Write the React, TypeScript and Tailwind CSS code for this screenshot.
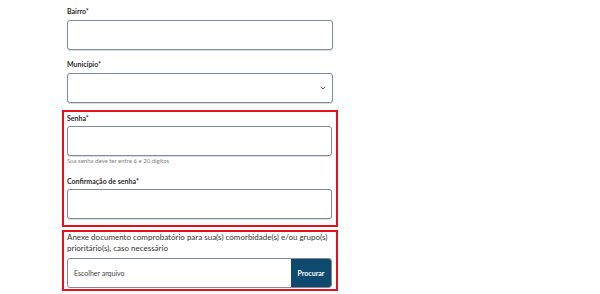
import React from "react";

const inputCls =
    "block w-full h-[30px] rounded-[3px] border border-[#7d8aa0] bg-white shadow-[0_1px_1px_rgba(0,0,0,0.15)]";
const labelCls = "block text-[7px] leading-[10px] font-bold text-[#2b2b2b]";

export default function App() {
    return (
        <div className="w-[600px] h-[294px] bg-white overflow-hidden" style={{ fontFamily: "Lato, 'Open Sans', sans-serif" }}>
            <div className="ml-[62px] w-[276px] pt-[6px]">
                {/* Bairro */}
                <div className="px-[5px]">
                    <label className={labelCls}>Bairro*</label>
                    <div className={`${inputCls} mt-[4px]`}></div>
                </div>

                {/* Município */}
                <div className="px-[5px] mt-[9px]">
                    <label className={labelCls}>Município*</label>
                    <div className={`${inputCls} mt-[4px] flex items-center justify-end pr-[6px]`}>
                        <svg width="6" height="4" viewBox="0 0 6 4" fill="none">
                            <path d="M0.8 0.8l2.2 2.2L5.2 0.8" stroke="#555" strokeWidth="1" />
                        </svg>
                    </div>
                </div>

                {/* Senha */}
                <div className="mt-[7px] border-2 border-[#e8101a] pl-[3px] pr-[4px] pt-[1px] pb-[6px]">
                    <label className={labelCls}>Senha*</label>
                    <div className={`${inputCls} mt-[3px]`}></div>
                    <p className="mt-[1px] text-[6px] leading-[8px] text-[#808080]">Sua senha deve ter entre 6 e 20 dígitos</p>
                    <label className={`${labelCls} mt-[11px]`}>Confirmação de senha*</label>
                    <div className={`${inputCls} mt-[3px]`}></div>
                </div>

                {/* Anexo */}
                <div className="mt-[3px] border-2 border-[#e8101a] pl-[3px] pr-[4px] pb-[1px]">
                    <p className="text-[8px] leading-[11px] text-[#333]">
                        Anexe documento comprobatório para sua(s) comorbidade(s) e/ou grupo(s) prioritário(s), caso necessário
                    </p>
                    <div className="mt-[4px] flex h-[30px] rounded-[3px] border border-[#7d8aa0] bg-white overflow-hidden">
                        <div className="flex-1 flex items-center pl-[6px] text-[7px] text-[#444]">Escolher arquivo</div>
                        <button className="w-[40px] h-full bg-[#0e4a6e] text-white text-[7px] font-bold">Procurar</button>
                    </div>
                </div>
            </div>
        </div>
    );
}
